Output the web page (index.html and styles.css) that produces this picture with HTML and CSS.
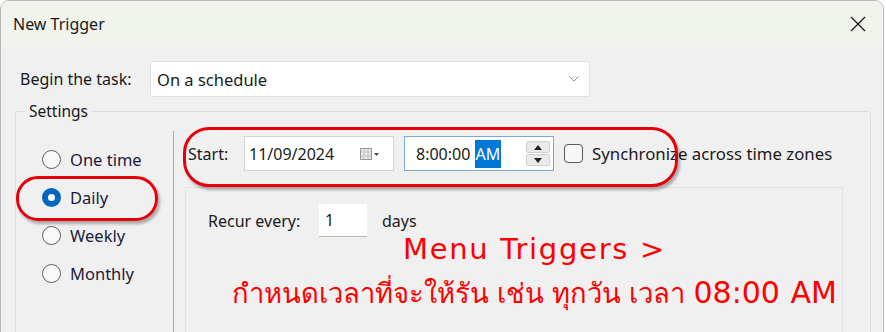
FILE: index.html
```html
<!DOCTYPE html>
<html lang="en">
  <head>
    <meta charset="UTF-8" />
    <title>New Trigger</title>
    <link rel="stylesheet" href="styles.css">
  </head>
  <body>
    <div class="window">
      <div class="titlebar">
        <span class="title">New Trigger</span>
        <svg class="close" width="16" height="16" viewBox="0 0 16 16">
          <path d="M1 1 L15 15 M15 1 L1 15" stroke="#1a1a1a" stroke-width="1.3" fill="none" />
        </svg>
      </div>

      <div class="task-row">
        <span class="task-label">Begin the task:</span>
        <div class="combo">
          <span>On a schedule</span>
          <svg width="10" height="6" viewBox="0 0 10 6">
            <path d="M0.5 0.5 L5 5 L9.5 0.5" stroke="#8a8a8a" stroke-width="1" fill="none" />
          </svg>
        </div>
      </div>

      <fieldset class="settings">
        <legend>Settings</legend>
        <div class="settings-body">
          <div class="radios">
            <label class="radio"><span class="dot"></span>One time</label>
            <label class="radio"><span class="dot checked"></span>Daily</label>
            <label class="radio"><span class="dot"></span>Weekly</label>
            <label class="radio"><span class="dot"></span>Monthly</label>
          </div>

          <div class="schedule">
            <div class="start-row">
              <span class="start-label">Start:</span>
              <div class="date-box">
                <span>11/09/2024</span>
                <span class="cal">
                  <svg width="20" height="12" viewBox="0 0 20 12">
                    <rect x="0.5" y="0.5" width="11" height="11" fill="#e8e8e8" stroke="#9a9a9a" />
                    <path d="M4 1 V11 M8 1 V11 M1 4 H11 M1 8 H11" stroke="#c4c4c4" stroke-width="1" />
                    <path d="M14 5 L19 5 L16.5 8 Z" fill="#4a4a4a" />
                  </svg>
                </span>
              </div>
              <div class="time-box">
                <span class="time-text">8:00:00 <span class="sel">AM</span></span>
                <div class="spinner">
                  <div class="spin-btn">
                    <svg width="8" height="5" viewBox="0 0 8 5"><path d="M0 5 L4 0 L8 5 Z" fill="#222" /></svg>
                  </div>
                  <div class="spin-btn">
                    <svg width="8" height="5" viewBox="0 0 8 5"><path d="M0 0 L4 5 L8 0 Z" fill="#222" /></svg>
                  </div>
                </div>
              </div>
              <span class="checkbox"></span>
              <span class="sync-label">Synchronize across time zones</span>
            </div>

            <div class="recur-panel">
              <div class="recur-row">
                <span class="recur-label">Recur every:</span>
                <div class="recur-input">1</div>
                <span class="recur-unit">days</span>
              </div>
            </div>
          </div>
        </div>
      </fieldset>

      <!-- annotations drawn on top of the dialog -->
      <div class="mark mark-start"></div>
      <div class="mark mark-daily"></div>
      <div class="note note-menu">Menu Triggers &gt;</div>
      <div class="note note-thai">กำหนดเวลาที่จะให้รัน เช่น ทุกวัน เวลา <span class="note-time">08:00 AM</span></div>
    </div>
  </body>
</html>
```

FILE: styles.css
```css
* {
  margin: 0;
  padding: 0;
  box-sizing: border-box;
}

body {
  background: #ffffff;
  font-family: "Noto Sans", "Open Sans", sans-serif;
  color: #1a1a1a;
}

.window {
  position: relative;
  width: 884px;
  height: 360px;
  border: 1px solid #b9b9b9;
  border-radius: 9px 9px 0 0;
  background: #f0f0f0;
  overflow: hidden;
}

.titlebar {
  height: 45px;
  background: #f1f3ed;
  display: flex;
  align-items: center;
  justify-content: space-between;
  padding: 0 17px 0 12px;
}

.title {
  font-size: 16px;
}

.task-row {
  display: flex;
  align-items: center;
  margin-top: 15px;
  padding-left: 19px;
}

.task-label {
  width: 130px;
  font-size: 16px;
}

.combo {
  width: 440px;
  height: 36px;
  background: #fff;
  border: 1px solid #e2e2e2;
  border-radius: 2px;
  display: flex;
  align-items: center;
  justify-content: space-between;
  padding: 0 10px 0 6px;
  font-size: 16.5px;
}

.settings {
  margin: 4px 12px 0 14px;
  height: 260px;
  border: 1px solid #dcdcdc;
  border-radius: 3px;
}

.settings legend {
  margin-left: 9px;
  padding: 0 4px;
  font-size: 15.5px;
  line-height: 20px;
}

.settings-body {
  display: flex;
  height: 100%;
}

.radios {
  width: 157px;
  padding: 19px 0 0 26px;
}

.radio {
  display: flex;
  align-items: center;
  height: 38px;
  font-size: 16.5px;
  color: #1c1c3a;
}

.dot {
  width: 19px;
  height: 19px;
  border: 1px solid #5f5f5f;
  border-radius: 50%;
  background: #f8f8f8;
  margin-right: 9px;
}

.dot.checked {
  border: 6px solid #0067c0;
  background: #fff;
}

.schedule {
  flex: 1;
  margin-top: 10px;
  border-left: 1px solid #a8a8a8;
}

.start-row {
  display: flex;
  align-items: center;
  margin-top: 5px;
  padding-left: 14px;
  height: 35px;
}

.start-label {
  width: 56px;
  font-size: 16px;
}

.date-box,
.time-box {
  height: 35px;
  width: 150px;
  background: #fff;
  border: 1px solid #d4d4d4;
  display: flex;
  align-items: center;
  justify-content: space-between;
  font-size: 16px;
}

.date-box {
  padding: 0 13px 0 4px;
}

.cal {
  display: flex;
}

.time-box {
  margin-left: 10px;
  border-color: #7aa7d6;
  padding: 0 3px 0 11px;
}

.sel {
  background: #0078d7;
  color: #fff;
  padding: 3px 1px;
}

.spinner {
  display: flex;
  flex-direction: column;
  gap: 1px;
}

.spin-btn {
  width: 24px;
  height: 12px;
  background: #eaeaea;
  border: 1px solid #cfcfcf;
  border-radius: 2px;
  display: flex;
  align-items: center;
  justify-content: center;
}

.checkbox {
  width: 19px;
  height: 19px;
  margin-left: 10px;
  border: 1px solid #5a5a5a;
  border-radius: 4px;
  background: #f7f7f7;
}

.sync-label {
  margin-left: 9px;
  font-size: 16.8px;
}

.recur-panel {
  margin: 16px 0 0 11px;
  width: 658px;
  height: 200px;
  border: 1px solid #e2e2e2;
  border-bottom: none;
  padding: 16px 0 0 22px;
}

.recur-row {
  display: flex;
  align-items: center;
  font-size: 16px;
}

.recur-label {
  width: 111px;
}

.recur-input {
  width: 48px;
  height: 33px;
  background: #fff;
  border-bottom: 1px solid #b8b8b8;
  padding: 5px 0 0 6px;
}

.recur-unit {
  margin-left: 15px;
}

.mark {
  position: absolute;
  border: 3px solid #e5000a;
  box-shadow: 2px 3px 3px rgba(0, 0, 0, 0.3);
}

.mark-start {
  left: 182px;
  top: 126px;
  width: 495px;
  height: 60px;
  border-radius: 26px;
}

.mark-daily {
  left: 15px;
  top: 175px;
  width: 142px;
  height: 45px;
  border-radius: 22px;
}

.note {
  position: absolute;
  color: #ff0000;
  white-space: nowrap;
}

.note-menu {
  left: 402px;
  top: 231px;
  font-family: "DejaVu Sans", sans-serif;
  font-size: 29px;
  letter-spacing: 1.7px;
}

.note-thai {
  left: 231px;
  top: 271px;
  font-size: 27.4px;
  font-family: "Noto Sans", "DejaVu Sans", sans-serif;
  word-spacing: 1px;
}

.note-time {
  font-family: "DejaVu Sans", sans-serif;
  font-size: 30px;
}
```
